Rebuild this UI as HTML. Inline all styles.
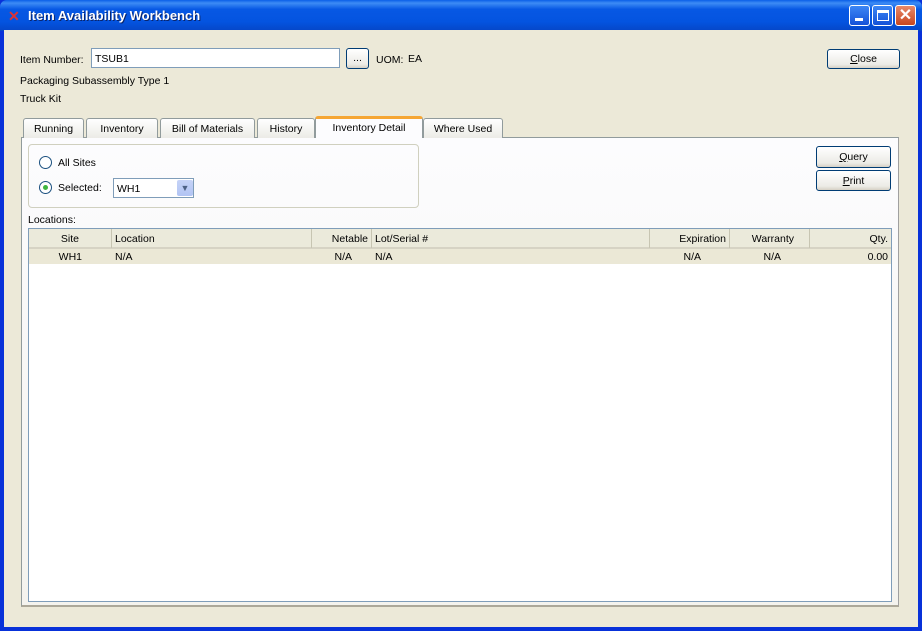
<!DOCTYPE html>
<html><head><style>
*{margin:0;padding:0;box-sizing:border-box}
body{width:922px;height:631px;position:relative;overflow:hidden;font:10.5px "Liberation Sans",sans-serif;color:#000;background:#0831d9}
.a{position:absolute}
#title{left:0;top:0;width:922px;height:31px;background:linear-gradient(#0a5fe8 0%,#3d8cf5 10%,#0758e4 30%,#0454e0 70%,#0546c7 100%);border-radius:7px 7px 0 0}
#body{left:4px;top:30px;width:914px;height:597px;background:#ece9d8}
.tb{top:5px;width:21px;height:21px;border:1px solid #fff;border-radius:3px;background:linear-gradient(#3c86f5,#1552d8)}
.btn{border:1px solid #003c74;border-radius:3px;background:linear-gradient(#fff,#ecebe6 80%,#d6d0c5);text-align:center;line-height:19px}
.tab{top:118px;height:20px;border:1px solid #919b9c;border-bottom:none;border-radius:3px 3px 0 0;background:linear-gradient(#fff,#ecebe6);text-align:center;line-height:20px}
.h{top:229px;height:19px;line-height:21px;border-right:1px solid #c7c5b2;padding:0 3px}
.r{top:249px;height:15px;line-height:17px;padding:0 3px}
</style></head><body>
<div class="a" id="title"></div>
<div class="a" style="left:8px;top:8px;color:#d33;font-weight:bold;font-size:14px">✕</div>
<div class="a" style="left:28px;top:8px;color:#fff;font-weight:bold;font-size:13px;text-shadow:1px 1px #0a246a">Item Availability Workbench</div>
<div class="a tb" style="left:849px"><div class="a" style="left:5px;top:12px;width:8px;height:3px;background:#fff"></div></div>
<div class="a tb" style="left:872px"><div class="a" style="left:4px;top:4px;width:12px;height:11px;border:1px solid #fff;border-top-width:3px"></div></div>
<div class="a tb" style="left:895px;background:linear-gradient(#e8896a,#c8461f);color:#fff;font-size:16px;font-weight:bold;text-align:center;line-height:19px">✕</div>
<div class="a" id="body"></div>
<div class="a" style="left:20px;top:54px">Item Number:</div>
<div class="a" style="left:91px;top:48px;width:249px;height:20px;border:1px solid #7f9db9;background:#fff;padding:4px 3px">TSUB1</div>
<div class="a btn" style="left:346px;top:48px;width:23px;height:21px">...</div>
<div class="a" style="left:376px;top:54px">UOM:</div>
<div class="a" style="left:408px;top:53px">EA</div>
<div class="a btn" style="left:827px;top:49px;width:73px;height:20px"><u>C</u>lose</div>
<div class="a" style="left:20px;top:75px">Packaging Subassembly Type 1</div>
<div class="a" style="left:20px;top:93px">Truck Kit</div>
<div class="a" style="left:21px;top:137px;width:878px;height:470px;border:1px solid #919b9c;border-right-color:#a0a0a0;border-bottom:2px solid #aca899;background:linear-gradient(#fcfcfe,#f4f3ee)"></div>
<div class="a tab" style="left:23px;width:61px">Running</div>
<div class="a tab" style="left:86px;width:72px">Inventory</div>
<div class="a tab" style="left:160px;width:95px">Bill of Materials</div>
<div class="a tab" style="left:257px;width:58px">History</div>
<div class="a tab" style="left:315px;top:116px;height:22px;width:108px;background:#fcfcfe;border-top:3px solid #f5a634;line-height:19px">Inventory Detail</div>
<div class="a tab" style="left:423px;width:80px">Where Used</div>
<div class="a" style="left:28px;top:144px;width:391px;height:64px;border:1px solid #d0d0bf;border-radius:4px"></div>
<div class="a" style="left:39px;top:156px;width:13px;height:13px;border:1px solid #1c5180;border-radius:50%;background:#fff"></div>
<div class="a" style="left:58px;top:157px">All Sites</div>
<div class="a" style="left:39px;top:181px;width:13px;height:13px;border:1px solid #1c5180;border-radius:50%;background:#fff"><div class="a" style="left:3px;top:3px;width:5px;height:5px;border-radius:50%;background:#3fb63f"></div></div>
<div class="a" style="left:58px;top:182px">Selected:</div>
<div class="a" style="left:113px;top:178px;width:81px;height:20px;border:1px solid #7f9db9;background:#fff;padding:4px 3px">WH1</div>
<div class="a" style="left:177px;top:180px;width:16px;height:16px;background:linear-gradient(#c6d3f7,#b1c4f4);border-radius:2px;color:#4d6185;text-align:center;font-size:9px;line-height:16px">▼</div>
<div class="a btn" style="left:816px;top:146px;width:75px;height:22px;line-height:21px"><u>Q</u>uery</div>
<div class="a btn" style="left:816px;top:170px;width:75px;height:21px;line-height:20px"><u>P</u>rint</div>
<div class="a" style="left:28px;top:214px">Locations:</div>
<div class="a" style="left:28px;top:228px;width:864px;height:374px;border:1px solid #7f9db9;background:#fff"></div>
<div class="a" style="left:29px;top:229px;width:862px;height:20px;background:#ebeadb;border-bottom:2px solid #d6d3c4"></div>
<div class="a h" style="left:29px;width:83px;text-align:right;padding-right:32px">Site</div>
<div class="a h" style="left:112px;width:200px">Location</div>
<div class="a h" style="left:312px;width:60px;text-align:right">Netable</div>
<div class="a h" style="left:372px;width:278px">Lot/Serial #</div>
<div class="a h" style="left:650px;width:80px;text-align:right">Expiration</div>
<div class="a h" style="left:730px;width:80px;text-align:right;padding-right:15px">Warranty</div>
<div class="a h" style="left:810px;width:81px;text-align:right;border:none">Qty.</div>
<div class="a" style="left:29px;top:249px;width:862px;height:15px;background:#ebe8d6"></div>
<div class="a r" style="left:29px;width:83px;text-align:right;padding-right:30px">WH1</div>
<div class="a r" style="left:112px">N/A</div>
<div class="a r" style="left:312px;width:60px;text-align:right;padding-right:20px">N/A</div>
<div class="a r" style="left:372px">N/A</div>
<div class="a r" style="left:650px;width:80px;text-align:right;padding-right:29px">N/A</div>
<div class="a r" style="left:730px;width:80px;text-align:right;padding-right:29px">N/A</div>
<div class="a r" style="left:810px;width:81px;text-align:right">0.00</div>
</body></html>
